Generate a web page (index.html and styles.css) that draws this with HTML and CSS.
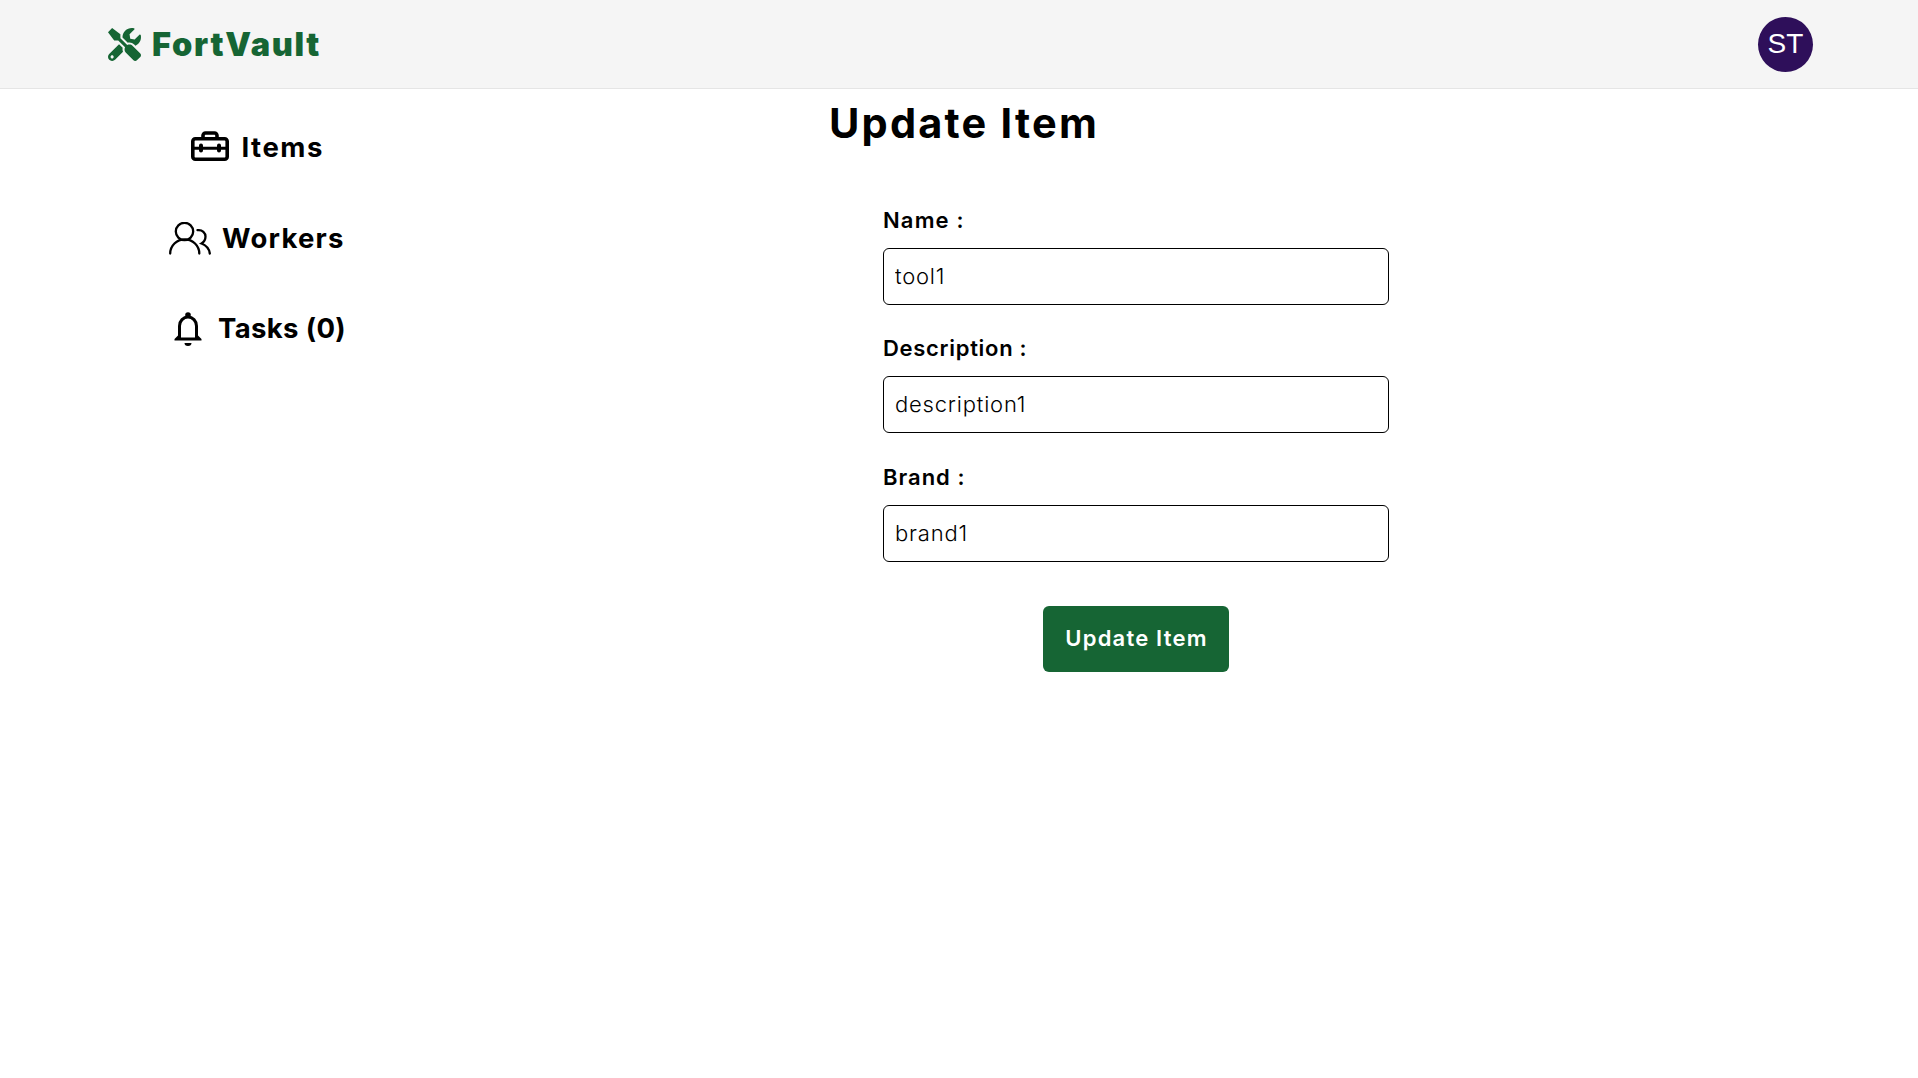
FILE: index.html
```html
<!DOCTYPE html>
<html lang="en">
<head>
<meta charset="utf-8">
<title>FortVault</title>
<link rel="stylesheet" href="styles.css">
</head>
<body>
<header class="header">
  <a class="brand">
    <svg class="brand-icon" viewBox="0 0 512 512" fill="currentColor"><path d="M501.1 395.7L384 278.6c-23.1-23.1-57.6-27.6-85.4-13.9L192 158.1V96L64 0 0 64l96 128h62.1l106.6 106.6c-13.6 27.8-9.2 62.3 13.9 85.4l117.1 117.1c14.6 14.6 38.2 14.6 52.7 0l52.7-52.7c14.5-14.6 14.5-38.2 0-52.7zM331.7 225c28.3 0 54.9 11 74.9 31l19.4 19.4c15.8-6.9 30.8-16.5 43.8-29.5 37.1-37.1 49.7-89.3 37.9-136.7-2.2-9-13.5-12.1-20.1-5.5l-74.4 74.4-67.9-11.3L334 98.9l74.4-74.4c6.6-6.6 3.4-17.9-5.7-20.2-47.4-11.7-99.6.9-136.6 37.9-28.5 28.5-41.9 66.1-41.2 103.6l82.1 82.1c8.1-1.9 16.5-2.9 24.7-2.9zm-103.9 82l-56.7-56.7L18.7 402.8c-25 25-25 65.5 0 90.5s65.5 25 90.5 0l123.6-123.6c-7.6-19.9-9.9-41.6-5-62.7zM64 472c-13.2 0-24-10.8-24-24 0-13.3 10.7-24 24-24s24 10.7 24 24c0 13.2-10.7 24-24 24z"/></svg>
    <span class="brand-name">FortVault</span>
  </a>
  <div class="avatar">ST</div>
</header>
<div class="layout">
  <nav class="sidebar">
    <a class="nav-item nav-items">
      <svg class="icon-toolbox" viewBox="0 0 38 30" fill="none" stroke="#000" stroke-width="3"><path d="M12 6.500V4.500a2.500 2.500 0 0 1 2.500-2.500h9a2.500 2.500 0 0 1 2.500 2.500V6.500" stroke-width="3.600"/><rect x="1.800" y="7.800" width="34.400" height="20.400" rx="2.500" stroke-width="3.600"/><path d="M2 17.200H36" stroke-width="3"/><path d="M10 14.500v5M28 14.500v5" stroke-width="4" stroke-linecap="round"/></svg>
      <span class="nav-text">Items</span>
    </a>
    <a class="nav-item nav-workers">
      <svg class="icon-users" viewBox="0 0 42 33" fill="none" stroke="#000" stroke-width="2.300" stroke-linecap="round"><circle cx="15.500" cy="9.500" r="8.700"/><path d="M1.200 31.500A14.400 14 0 0 1 30.300 31.500M28.500 8.200C33.500 7.500 36.500 11 36.500 14.500C36.500 18 34.500 20.300 32.500 21.500C37.500 23.500 40.300 27 40.800 31.500"/></svg>
      <span class="nav-text">Workers</span>
    </a>
    <a class="nav-item nav-tasks">
      <svg class="icon-bell" viewBox="0 0 28 34"><path d="M5.500 27V14a8.500 9 0 0 1 17 0V27" fill="none" stroke="#000" stroke-width="3"/><circle cx="14" cy="3" r="2.800"/><path d="M.5 28.500V27L4 23.500H6V25.500H22V23.500H24L27.500 27V28.500ZM10.500 31H17.500A3.500 3 0 0 1 10.500 31Z"/></svg>
      <span class="nav-text">Tasks (0)</span>
    </a>
  </nav>
  <main class="content">
    <h1 class="title">Update Item</h1>
    <form class="form">
      <div class="field"><label class="label label-name" for="name">Name :</label><input class="input" id="name" value="tool1"></div>
      <div class="field"><label class="label" for="description">Description :</label><input class="input" id="description" value="description1"></div>
      <div class="field"><label class="label label-brand" for="brand">Brand :</label><input class="input" id="brand" value="brand1"></div>
      <button class="submit" type="button">Update Item</button>
    </form>
  </main>
</div>
</body>
</html>
```
FILE: styles.css
```css
* { box-sizing: border-box; }
body { margin: 0; background: #fff; color: #000; font-family: Inter, "Open Sans", sans-serif; }
.header { display: flex; align-items: center; justify-content: space-between; height: 89px; padding: 0 105px 0 108px; background: #f5f5f5; border-bottom: 1px solid #e5e5e5; }
.brand { display: flex; align-items: center; gap: 11px; color: #166534; }
.brand-icon { width: 33px; height: 33px; }
.brand-name { padding-top: 2px; font-size: 32.500px; font-weight: 900; line-height: 40px; letter-spacing: 1.700px; }
.avatar { display: flex; align-items: center; justify-content: center; width: 55px; height: 55px; border-radius: 50%; background: #2e0f5a; color: #fff; font: 28px "Liberation Sans", sans-serif; }
.layout { display: flex; }
.sidebar { display: flex; flex-direction: column; width: 520px; padding-top: 36px; }
.nav-item { display: flex; align-items: center; height: 45px; margin-bottom: 45.500px; font-size: 27.500px; font-weight: 700; }
.nav-items { padding-left: 191px; gap: 12.500px; letter-spacing: 1.500px; }
.nav-workers { padding-left: 169px; gap: 11px; letter-spacing: 1.250px; }
.nav-tasks { padding-left: 174px; gap: 16px; letter-spacing: .35px; }
.nav-items .nav-text, .nav-tasks .nav-text { padding-bottom: 2px; }
.icon-toolbox { width: 38px; height: 30px; margin-bottom: 3px; }
.icon-users { width: 42px; height: 33px; }
.icon-bell { width: 28px; height: 34px; }
.content { flex: 1; }
.title { margin: 9px 0 0 309px; font-size: 41.500px; font-weight: 700; line-height: 50px; letter-spacing: 2.200px; }
.form { display: flex; flex-direction: column; width: 506px; margin: 57px 0 0 363px; }
.field { display: flex; flex-direction: column; margin-bottom: 28.400px; }
.label { height: 43px; font-size: 22px; font-weight: 600; line-height: 30px; letter-spacing: .7px; }
.label-name { letter-spacing: 1.150px; }
.label-brand { letter-spacing: 1px; }
.input { height: 57px; padding: 0 11px 1px; border: 1px solid #000; border-radius: 6px; background: #fff; color: #000; font: 300 22px Inter, sans-serif; letter-spacing: .8px; outline: 0; }
.submit { align-self: center; width: 186px; height: 66px; margin-top: 16px; padding: 0 0 2px 1px; border: 0; border-radius: 6px; background: #166534; color: #fff; font: 600 22px Inter, sans-serif; letter-spacing: 1.200px; }
```
